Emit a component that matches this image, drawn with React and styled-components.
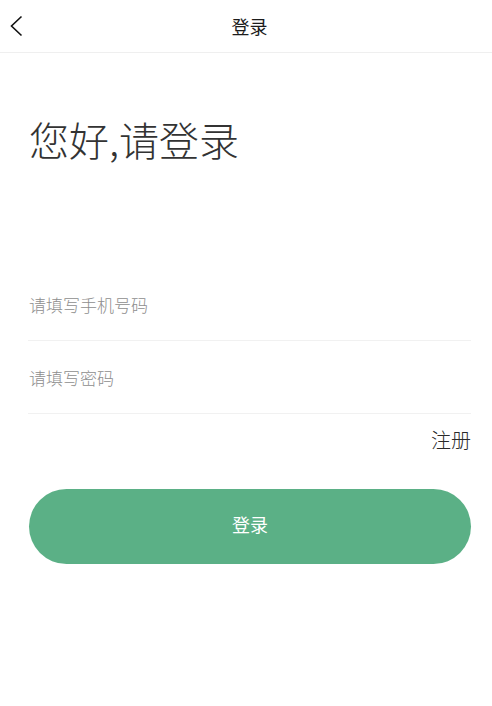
import React, { useState } from 'react';
import styled, { createGlobalStyle } from 'styled-components';

const GlobalStyle = createGlobalStyle`
  html, body {
    margin: 0;
    padding: 0;
    background: #ffffff;
  }
  body {
    font-family: "Noto Sans CJK SC", "Noto Sans", sans-serif;
    -webkit-font-smoothing: antialiased;
  }
  * {
    box-sizing: border-box;
  }
`;

const Page = styled.div`
  width: 492px;
  min-height: 706px;
  background: #ffffff;
  display: flex;
  flex-direction: column;
`;

const NavBar = styled.header`
  height: 53px;
  display: grid;
  grid-template-columns: 60px 1fr 53px;
  align-items: center;
  border-bottom: 1px solid #efefef;
`;

const BackButton = styled.button`
  border: none;
  background: none;
  padding: 0 0 0 9px;
  height: 100%;
  display: flex;
  align-items: center;
  cursor: pointer;
`;

const NavTitle = styled.h1`
  margin: 0;
  text-align: center;
  font-size: 18px;
  font-weight: 400;
  color: #1c1c1c;
  line-height: 1;
  padding-bottom: 1px;
`;

const Content = styled.main`
  padding: 0 21px 0 28px;
  display: flex;
  flex-direction: column;
`;

const Greeting = styled.h2`
  margin: 61px 0 0 1px;
  font-size: 40px;
  font-weight: 300;
  line-height: 50px;
  color: #333333;
`;

const Form = styled.form`
  margin-top: 104px;
  display: flex;
  flex-direction: column;
`;

const Field = styled.div`
  height: 73px;
  display: flex;
  align-items: center;
  border-bottom: 1px solid #f1f1f1;
`;

const Input = styled.input`
  flex: 1;
  border: none;
  outline: none;
  background: transparent;
  padding: 0 0 0 1px;
  font-family: "Noto Sans CJK SC", "Noto Sans", sans-serif;
  font-size: 17px;
  font-weight: 300;
  color: #333333;

  &::placeholder {
    color: #8e8e8e;
  }
`;

const LinkRow = styled.div`
  display: flex;
  justify-content: flex-end;
  margin-top: 12px;
`;

const RegisterLink = styled.a`
  font-size: 20px;
  line-height: 28px;
  font-weight: 300;
  color: #2a2a2a;
  text-decoration: none;
  cursor: pointer;
`;

const SubmitButton = styled.button`
  margin: 35px 0 0 1px;
  height: 75px;
  padding: 0 0 5px;
  border: none;
  border-radius: 38px;
  background: #5bb086;
  color: #ffffff;
  font-family: "Noto Sans CJK SC", "Noto Sans", sans-serif;
  font-size: 18px;
  cursor: pointer;
`;

const BackIcon = () => (
  <svg width="14" height="22" viewBox="0 0 14 22" fill="none">
    <path d="M12.5 1.5 L2.5 11 L12.5 20.5" stroke="#111" strokeWidth="1.6" />
  </svg>
);

export default function App() {
  const [phone, setPhone] = useState('');
  const [password, setPassword] = useState('');

  return (
    <Page>
      <GlobalStyle />
      <NavBar>
        <BackButton type="button" aria-label="返回">
          <BackIcon />
        </BackButton>
        <NavTitle>登录</NavTitle>
        <span />
      </NavBar>
      <Content>
        <Greeting>您好,请登录</Greeting>
        <Form onSubmit={(e) => e.preventDefault()}>
          <Field>
            <Input
              type="tel"
              placeholder="请填写手机号码"
              value={phone}
              onChange={(e) => setPhone(e.target.value)}
            />
          </Field>
          <Field>
            <Input
              type="password"
              placeholder="请填写密码"
              value={password}
              onChange={(e) => setPassword(e.target.value)}
            />
          </Field>
          <LinkRow>
            <RegisterLink>注册</RegisterLink>
          </LinkRow>
          <SubmitButton type="submit">登录</SubmitButton>
        </Form>
      </Content>
    </Page>
  );
}
